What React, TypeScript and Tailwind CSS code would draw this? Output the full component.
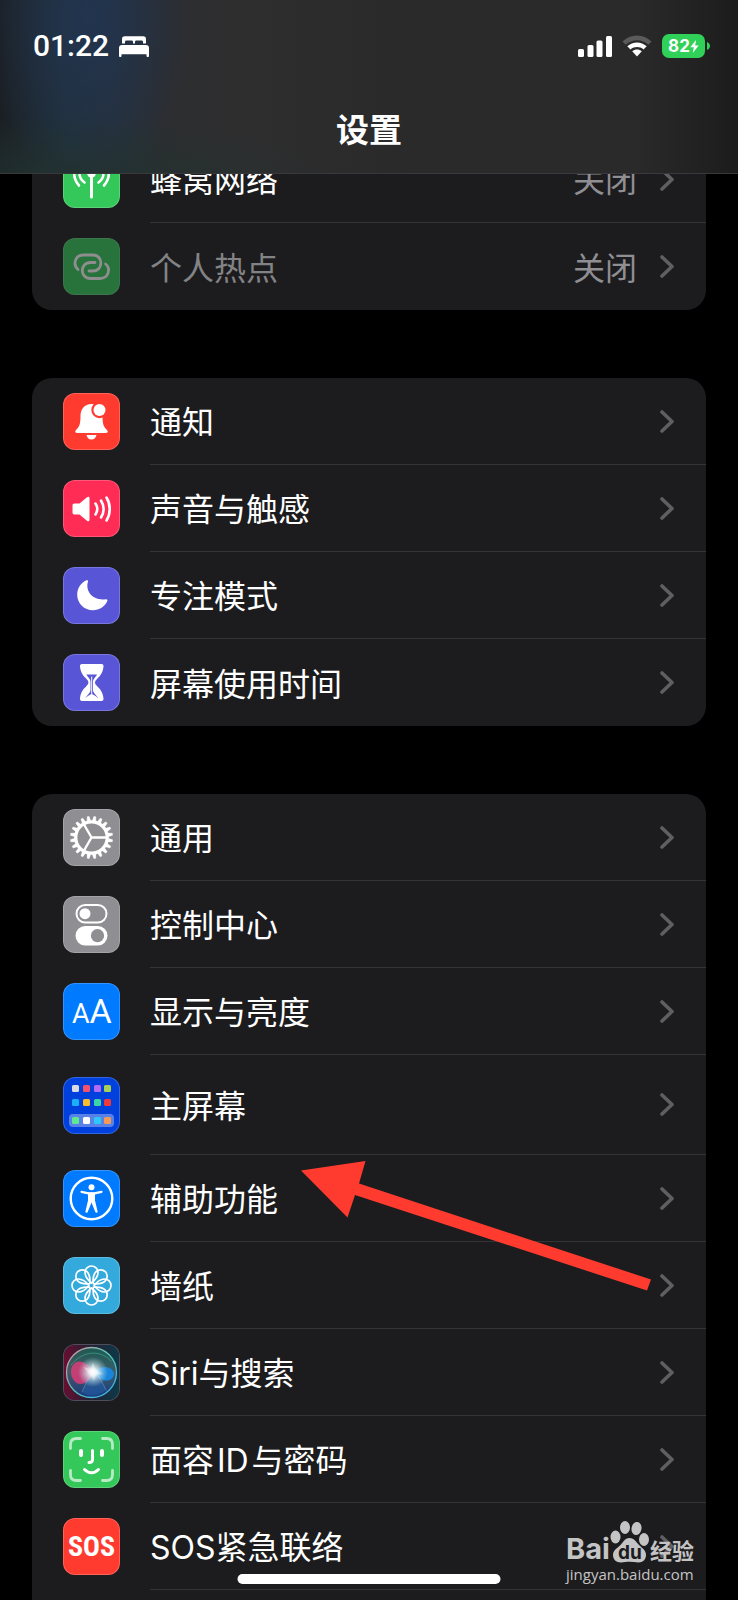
import type { ReactNode } from 'react';
import clsx from 'clsx';

type Item = {
  label: string;
  color: string;
  icon: ReactNode;
  value?: string;
  dimmed?: boolean;
  tall?: boolean;
};

const petals = [0, 45, 90, 135, 180, 225, 270, 315];
const teeth = Array.from({ length: 20 }, (_, i) => i * 18 + 9);

const apps = [
  { x: 9, y: 8, fill: '#d9dbe3' },
  { x: 20, y: 8, fill: '#f4516c' },
  { x: 31, y: 8, fill: '#b36bf5' },
  { x: 41, y: 8, fill: '#a5d154' },
  { x: 9, y: 22, fill: '#1ab0f5' },
  { x: 20, y: 22, fill: '#fbbd2c' },
  { x: 31, y: 22, fill: '#3fd4a8' },
  { x: 41, y: 22, fill: '#ee3a3a' },
  { x: 9, y: 40, fill: '#5ee890' },
  { x: 20, y: 40, fill: '#ffffff' },
  { x: 31, y: 40, fill: '#2cc8fb' },
  { x: 41, y: 40, fill: '#f59a55' },
];

function Glyph({ children }: { children: ReactNode }) {
  return (
    <svg viewBox="0 0 57 57" className="w-[57px] h-[57px] shrink-0" fill="none" strokeLinecap="round" strokeLinejoin="round" aria-hidden="true">
      {children}
    </svg>
  );
}

function CellularIcon() {
  return (
    <Glyph>
      <circle cx="28.500" cy="22" r="4.500" fill="#fff" />
      <path d="M28.500 22V46" stroke="#fff" strokeWidth="3" />
      <path d="M21.500 31.500a11.500 11.500 0 0 1 0-19M35.500 31.500a11.500 11.500 0 0 0 0-19M16 34.500a18.500 18.500 0 0 1 0-25M41 34.500a18.500 18.500 0 0 0 0-25" stroke="#fff" strokeWidth="2.600" />
    </Glyph>
  );
}

function HotspotIcon() {
  return (
    <Glyph>
      <g stroke="#fff" strokeWidth="2.800">
        <path d="M15 31.500C9.500 26.500 12 17 20.500 17H30C40.500 17 40.500 33 30 33H26" />
        <path d="M42.600 26C48.100 30.500 45.600 40.500 37.100 40.500H27.600C16.500 40.500 16.500 24.500 27.600 24.500H32" />
      </g>
    </Glyph>
  );
}

function BellIcon() {
  return (
    <Glyph>
      <path d="M28.500 11c-7 0-11 5-11 12 0 8-1 10.500-4.500 14-1.500 1.600-.8 3 1.200 3h28.600c2 0 2.700-1.400 1.200-3-3.500-3.500-4.500-6-4.500-14 0-7-4-12-11-12Z" fill="#fff" />
      <path d="M23.500 42h10c-.8 3-2.600 4.500-5 4.500s-4.200-1.500-5-4.500Z" fill="#fff" />
      <circle cx="36.500" cy="17" r="8.200" fill="#ff3b30" />
      <circle cx="36.500" cy="17" r="6" fill="#fff" />
    </Glyph>
  );
}

function SoundIcon() {
  return (
    <Glyph>
      <path d="M11.500 23.500h5l7.500-6.200c1.200-1 2.500-.5 2.500 1v21.400c0 1.500-1.300 2-2.500 1l-7.500-6.200h-5c-1.300 0-2-.7-2-2v-7c0-1.300.7-2 2-2Z" fill="#fff" />
      <path d="M32.500 23.500a10 10 0 0 1 0 11M38 20.500a16 16 0 0 1 0 17M43.500 17.500a22 22 0 0 1 0 23" stroke="#fff" strokeWidth="2.600" />
    </Glyph>
  );
}

function MoonIcon() {
  return (
    <Glyph>
      <path d="M23.500 13.300c.9-.5 1.900.2 1.500 1.300-3 9.500 4.500 19.400 17.800 17.600 1.300-.2 2 .7 1.500 1.800-2.300 5.500-8 9.200-14.300 9.200-8.800 0-15.800-6.800-15.800-15.500 0-6.300 3.600-11.900 9.300-14.400Z" fill="#fff" />
    </Glyph>
  );
}

function HourglassIcon() {
  return (
    <Glyph>
      <path d="M19 10h19.500c1.500 0 2.200 1 2 2.500-.6 6.500-3.500 9.500-6.500 12.500-2.600 2.600-2.600 4.400 0 7 3 3 5.900 6 6.500 12.500.2 1.500-.5 2.500-2 2.500H19c-1.500 0-2.200-1-2-2.500.6-6.500 3.500-9.500 6.500-12.500 2.600-2.600 2.600-4.400 0-7-3-3-5.900-6-6.500-12.500-.2-1.500.5-2.500 2-2.500Z" fill="#fff" />
      <path d="M23.500 20.500h10.500c-1 2.500-4 4-4 7.500v8c0 3 3.500 5 5 8H22.500c1.500-3 5-5 5-8V28c0-3.500-3-5-4-7.500Z" fill="#5856d6" />
      <path d="M28.700 23v17" stroke="#fff" strokeWidth="1" />
      <path d="M22 44.500c2-2.500 4.500-3.500 6.700-4.500 2.200 1 4.700 2 6.700 4.500Z" fill="#fff" />
    </Glyph>
  );
}

function GearIcon() {
  return (
    <Glyph>
      <circle cx="28.500" cy="28.500" r="15.700" stroke="#fff" strokeWidth="3.200" />
      {teeth.map((deg) => (
        <path key={deg} d="M26.700 11.800 27.500 7.300H29.500L30.300 11.800Z" fill="#fff" stroke="#fff" strokeWidth=".4" transform={`rotate(${deg} 28.5 28.5)`} />
      ))}
      <path d="M28.500 28.500H43M28.500 28.500 21 15.500M28.500 28.500 21 41.500" stroke="#fff" strokeWidth="2.400" />
    </Glyph>
  );
}

function ControlCenterIcon() {
  return (
    <Glyph>
      <rect x="13.500" y="9" width="30" height="17.500" rx="8.750" stroke="#fff" strokeWidth="2" />
      <circle cx="22" cy="17.700" r="5.500" fill="#fff" />
      <rect x="12.500" y="30" width="32" height="19.500" rx="9.750" fill="#fff" />
      <circle cx="34.500" cy="39.700" r="6.600" fill="#8e8e93" />
    </Glyph>
  );
}

function DisplayIcon() {
  return (
    <Glyph>
      <g fill="#fff" fontFamily="Roboto, sans-serif" fontWeight="400">
        <text x="9" y="40" fontSize="27">A</text>
        <text x="26.500" y="40" fontSize="34">A</text>
      </g>
    </Glyph>
  );
}

function HomeScreenIcon() {
  return (
    <Glyph>
      <rect x="6" y="37" width="45" height="13" rx="4" fill="#fff" fillOpacity=".35" />
      {apps.map((app) => (
        <rect key={`${app.x}-${app.y}`} x={app.x} y={app.y} width="7" height="7" rx="1.500" fill={app.fill} />
      ))}
    </Glyph>
  );
}

function AccessibilityIcon() {
  return (
    <Glyph>
      <circle cx="28.500" cy="28.500" r="20.800" stroke="#fff" strokeWidth="2.400" />
      <circle cx="28.500" cy="17.200" r="3" fill="#fff" />
      <path d="M18.500 21.800 25.500 23.300H31.500L38.500 21.800" stroke="#fff" strokeWidth="2.200" />
      <path d="M25 22.500h7v8l2.600 11c.2 1.300-1.800 1.800-2.300.6L28.500 32.500l-3.800 9.600c-.5 1.200-2.500.7-2.300-.6l2.600-11Z" fill="#fff" />
    </Glyph>
  );
}

function WallpaperIcon() {
  return (
    <Glyph>
      <g stroke="#fff" strokeWidth="1.700">
        {petals.map((deg) => (
          <path key={deg} d="M28.500 26C26 24 22 19.500 22 15.500a6.500 6.500 0 0 1 13 0C35 19.500 31 24 28.500 26Z" transform={`rotate(${deg} 28.5 28.5)`} />
        ))}
      </g>
    </Glyph>
  );
}

function SiriIcon() {
  return (
    <Glyph>
      <defs>
        <linearGradient id="siri-bg" x1="0" y1="0" x2="1" y2="0">
          <stop offset="0" stopColor="#6b0d31" />
          <stop offset=".45" stopColor="#252034" />
          <stop offset="1" stopColor="#0b3a48" />
        </linearGradient>
        <linearGradient id="siri-orb" x1="0" y1="0" x2="0" y2="1">
          <stop offset="0" stopColor="#1c6457" />
          <stop offset=".5" stopColor="#44636e" />
          <stop offset="1" stopColor="#123f8c" />
        </linearGradient>
        <linearGradient id="siri-ring" x1="0" y1="0" x2="1" y2="1">
          <stop offset="0" stopColor="#e58ba0" />
          <stop offset=".5" stopColor="#54c9b4" />
          <stop offset="1" stopColor="#3fa5f2" />
        </linearGradient>
        <radialGradient id="siri-core">
          <stop offset="0" stopColor="#fff" />
          <stop offset=".25" stopColor="#f2fdff" stopOpacity=".9" />
          <stop offset="1" stopColor="#a7dbe8" stopOpacity="0" />
        </radialGradient>
      </defs>
      <rect width="57" height="57" rx="12" fill="url(#siri-bg)" />
      <circle cx="28.500" cy="28.500" r="25" fill="url(#siri-orb)" fillOpacity=".85" stroke="url(#siri-ring)" strokeWidth="1.300" />
      <path d="M31 29C25 18 15 14 10 21S10 40 17 40 28 34 31 29Z" fill="#e33b78" fillOpacity=".8" />
      <path d="M31 29c5-8 17-8 20 0 0 10-14 10-20 0Z" fill="#1689e6" fillOpacity=".9" />
      <path d="M19 48C23 38 27 32 31 28c5 5 9 11 12 18-7 6-17 8-24 2Z" fill="#2461ad" fillOpacity=".5" />
      <path d="M19 48C23 38 27 32 31 28c5 5 9 11 12 18" stroke="#7fa8dc" strokeOpacity=".6" strokeWidth=".8" />
      <path d="M8 21C18 8 36 4 48 17" stroke="#4cc09d" strokeOpacity=".5" />
      <circle cx="30" cy="28" r="15" fill="url(#siri-core)" />
      <path d="M30 18 32 25 40 30 33 31 31 37 28 31 20 23 28 25Z" fill="#fff" fillOpacity=".35" />
    </Glyph>
  );
}

function FaceIdIcon() {
  return (
    <Glyph>
      <path d="M7.500 17.500v-4c0-4 2-6 6-6h4M39.500 7.500h4c4 0 6 2 6 6v4M49.500 39.500v4c0 4-2 6-6 6h-4M17.500 49.500h-4c-4 0-6-2-6-6v-4" stroke="#fff" strokeOpacity=".65" strokeWidth="2.800" />
      <path d="M18 20v4M39 20v4" stroke="#fff" strokeWidth="4" />
      <path d="M29.500 19.500v9c0 2-1 3-3.500 3M21.500 38.500c4 4.200 10 4.200 14 0" stroke="#fff" strokeWidth="3" />
    </Glyph>
  );
}

function SosIcon() {
  return (
    <span className="font-['Roboto_Condensed','Roboto',sans-serif] text-[28px] leading-none font-bold text-white">
      SOS
    </span>
  );
}

const network: Item[] = [
  { label: '蜂窝网络', color: 'bg-[#34c759]', icon: <CellularIcon />, value: '关闭' },
  { label: '个人热点', color: 'bg-[#34c759]', icon: <HotspotIcon />, value: '关闭', dimmed: true },
];

const alerts: Item[] = [
  { label: '通知', color: 'bg-[#ff3b30]', icon: <BellIcon /> },
  { label: '声音与触感', color: 'bg-[#ff2d55]', icon: <SoundIcon /> },
  { label: '专注模式', color: 'bg-[#5856d6]', icon: <MoonIcon /> },
  { label: '屏幕使用时间', color: 'bg-[#5856d6]', icon: <HourglassIcon /> },
];

const system: Item[] = [
  { label: '通用', color: 'bg-[#8e8e93]', icon: <GearIcon /> },
  { label: '控制中心', color: 'bg-[#8e8e93]', icon: <ControlCenterIcon /> },
  { label: '显示与亮度', color: 'bg-[#007aff]', icon: <DisplayIcon /> },
  { label: '主屏幕', color: 'bg-[#0040dd]', icon: <HomeScreenIcon />, tall: true },
  { label: '辅助功能', color: 'bg-[#007aff]', icon: <AccessibilityIcon /> },
  { label: '墙纸', color: 'bg-[#34aadc]', icon: <WallpaperIcon /> },
  { label: 'Siri与搜索', color: 'bg-[#252034]', icon: <SiriIcon /> },
  { label: '面容\u200aID\u200a与密码', color: 'bg-[#34c759]', icon: <FaceIdIcon /> },
  { label: 'SOS紧急联络', color: 'bg-[#ff3b30]', icon: <SosIcon /> },
];

function Row({ item, divider }: { item: Item; divider: boolean }) {
  return (
    <li>
      <a href="#" className={clsx('flex items-center pl-[31px]', item.tall ? 'h-[100px]' : 'h-[87px]')}>
        <span
          className={clsx(
            'flex w-[57px] h-[57px] shrink-0 items-center justify-center overflow-hidden rounded-xl border border-white/20',
            item.color,
            item.dimmed && 'opacity-50'
          )}
        >
          {item.icon}
        </span>
        <span
          className={clsx(
            'ml-[30px] flex h-full flex-1 items-center pr-8 text-[32px] leading-10',
            divider && 'border-b border-[#343437]'
          )}
        >
          <span className={clsx('flex-1 pt-1', item.dimmed ? 'text-[#838385]' : 'text-white')}>{item.label}</span>
          {item.value && <span className="mr-[23px] pt-1 text-[#8e8e93]">{item.value}</span>}
          <svg viewBox="0 0 14 23" className="w-[14px] h-[23px]" fill="none" aria-hidden="true">
            <path d="M2 2 12 11.500 2 21" stroke="#5e5e63" strokeWidth="3.600" strokeLinecap="round" strokeLinejoin="round" />
          </svg>
        </span>
      </a>
    </li>
  );
}

function Group({ items, open }: { items: Item[]; open?: boolean }) {
  return (
    <ul className={clsx('bg-[#1c1c1e]', open ? 'flex-1 rounded-t-[20px]' : 'rounded-[20px]')}>
      {items.map((item, i) => (
        <Row key={item.label} item={item} divider={open || i < items.length - 1} />
      ))}
    </ul>
  );
}

function StatusBar() {
  return (
    <div className="flex h-9 items-center justify-between pl-[33px] pr-7">
      <div className="flex items-center gap-[10px]">
        <span className="font-['Roboto',sans-serif] text-[30px] leading-9 font-medium">01:22</span>
        <svg viewBox="0 0 30 21" className="w-[30px] h-[21px]" fill="#fff" aria-label="睡眠">
          <path d="M3 7.500V3c0-1.800 1-2.800 2.800-2.800h18.400C26 .2 27 1.200 27 3v4.500h-3V6c0-1-.5-1.500-1.500-1.500h-5c-1 0-1.500.5-1.500 1.500v1.500h-2V6c0-1-.5-1.500-1.500-1.500h-5C6.500 4.500 6 5 6 6v1.500Z" />
          <path d="M3 9h24c2 0 3 1.200 3 3v8c0 1.300-2.500 1.300-2.500 0v-1.800h-25V20C2.500 21.300 0 21.300 0 20v-8c0-1.800 1-3 3-3Z" />
        </svg>
      </div>
      <div className="flex items-center gap-[10px]">
        <svg viewBox="0 0 34 21" className="w-[34px] h-[21px]" fill="#fff" aria-label="信号">
          <rect x="0" y="13" width="6" height="8" rx="1.500" />
          <rect x="9.500" y="9" width="6" height="12" rx="1.500" />
          <rect x="18.500" y="4.500" width="6" height="16.500" rx="1.500" />
          <rect x="28" y="0" width="6" height="21" rx="1.500" />
        </svg>
        <svg viewBox="0 0 30 22" className="w-[30px] h-[22px]" aria-label="无线局域网">
          <path d="M0.500 6.500C8.500-1.500 21.500-1.500 29.500 6.500L26.300 9.700C20 3.700 10 3.700 3.700 9.700Z" fill="#5b5b5c" />
          <path d="M5.300 11.300C10.800 6.200 19.200 6.200 24.700 11.300L21.500 14.500C17.800 11.300 12.200 11.300 8.500 14.500Z" fill="#fff" />
          <path d="M10.200 16.300C13 14 17 14 19.800 16.300L15 21.500Z" fill="#fff" />
        </svg>
        <div className="flex items-center gap-[2px]">
          <div className="flex h-6 w-[43px] items-center justify-center rounded-[7px] bg-[#30d158]">
            <span className="font-['Inter',sans-serif] text-[17px] leading-6 font-bold">82</span>
            <svg viewBox="0 0 9 13" className="w-[9px] h-[13px]" fill="#fff" aria-hidden="true">
              <path d="M6 0 .3 7.300h3.500L2.800 13 8.700 5.500H5.200Z" />
            </svg>
          </div>
          <svg viewBox="0 0 3 8" className="w-[3px] h-2" aria-hidden="true">
            <path d="M0 0C4 1.500 4 6.500 0 8Z" fill="#30d158" />
          </svg>
        </div>
      </div>
    </div>
  );
}

function Watermark() {
  return (
    <div className="absolute right-10 bottom-[17px] flex w-[132px] flex-col gap-[2px] text-[#c4c4c5]">
      <div className="flex items-end">
        <span className="font-['Inter',sans-serif] text-[29px] leading-7 font-bold">Bai</span>
        <svg viewBox="0 0 40 42" className="h-[42px] w-10 shrink-0" fill="currentColor" aria-hidden="true">
          <ellipse cx="5.500" cy="16" rx="5" ry="6.500" />
          <ellipse cx="15" cy="6.500" rx="5" ry="6.500" />
          <ellipse cx="26.500" cy="7.500" rx="5" ry="6.500" transform="rotate(10 26.500 7.500)" />
          <ellipse cx="34" cy="18.500" rx="5" ry="6.500" />
          <path d="M19.500 17c5 0 6.500 4 9.500 7s7 5 7 10c0 4.500-3 7.500-7.500 7.500-3 0-6-.7-9-.7s-5.500.7-8.500.7C6 41.500 3 38.500 3 34c0-5 4.500-7 7.500-10s4-7 9-7Z" />
          <text x="8" y="38" fontSize="19" fontWeight="700" fontFamily="Inter, sans-serif" fill="#1c1c1e">du</text>
        </svg>
        <span className="text-[22px] leading-6 font-bold">经验</span>
      </div>
      <span className="font-['Open_Sans',sans-serif] text-[15px] leading-[18px]">jingyan.baidu.com</span>
    </div>
  );
}

export default function App() {
  return (
    <div className="relative flex h-screen flex-col overflow-hidden bg-black font-['Inter','Noto_Sans_CJK_SC',sans-serif] text-white">
      <header className="relative z-10 shrink-0 border-b border-[#39393b] bg-[radial-gradient(ellipse_at_9%_110%,#22322f_0%,#22322f00_28%),radial-gradient(ellipse_14%_100%_at_12%_10%,#22344f_0%,#22344f00_100%),linear-gradient(90deg,#1b1f24_0%,#20303a_9%,#26303a_15%,#2c2d30_22%,#2e2e2f_32%,#2a2a2b_55%,#2a2a2b_86%,#1c1c1d_100%)] pt-7 pb-[19px]">
        <StatusBar />
        <h1 className="mt-[42px] text-center text-[33px] leading-[48px] font-bold">设置</h1>
      </header>

      {/* Scrolled list, its first row sits partly under the header */}
      <main className="-mt-[38px] flex flex-1 flex-col gap-[68px] px-8">
        <Group items={network} />
        <Group items={alerts} />
        <div className="relative flex flex-1 flex-col">
          <Group items={system} open />
          <svg viewBox="0 0 350 130" className="pointer-events-none absolute top-[367px] right-[55px] w-[350px] h-[130px]" aria-hidden="true">
            <path d="M0 9.500 64.500 0 58 22.500 350 118.500 346 129.500 54 34 46.500 56.500Z" fill="#ff3b30" />
          </svg>
        </div>
      </main>

      <Watermark />
      <div className="absolute bottom-4 left-1/2 h-[10px] w-[263px] -translate-x-1/2 rounded-full bg-white" />
    </div>
  );
}
